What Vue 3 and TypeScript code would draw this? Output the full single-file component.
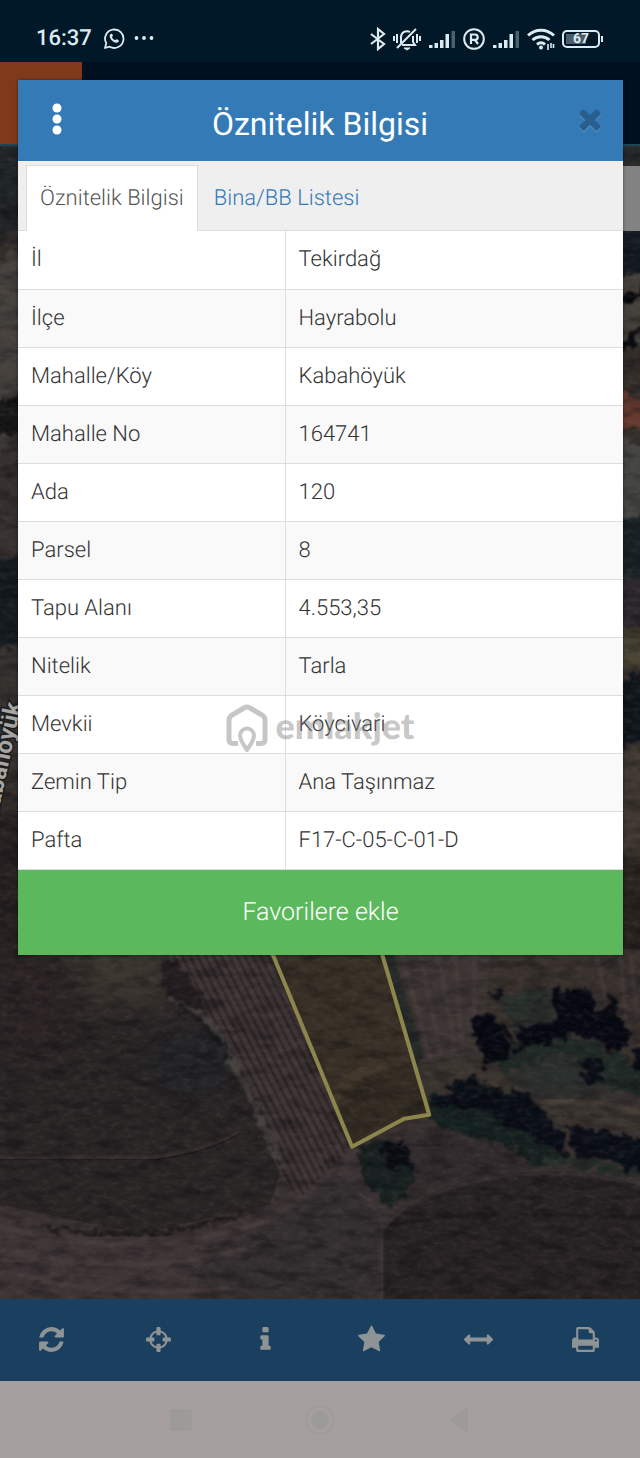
<script setup lang="ts">
import { ref } from 'vue'

interface Attribute {
  label: string
  value: string
}

interface Tool {
  name: string
  path: string
}

const attributes: Attribute[] = [
  { label: 'İl', value: 'Tekirdağ' },
  { label: 'İlçe', value: 'Hayrabolu' },
  { label: 'Mahalle/Köy', value: 'Kabahöyük' },
  { label: 'Mahalle No', value: '164741' },
  { label: 'Ada', value: '120' },
  { label: 'Parsel', value: '8' },
  { label: 'Tapu Alanı', value: '4.553,35' },
  { label: 'Nitelik', value: 'Tarla' },
  { label: 'Mevkii', value: 'Köycivari' },
  { label: 'Zemin Tip', value: 'Ana Taşınmaz' },
  { label: 'Pafta', value: 'F17-C-05-C-01-D' },
]

const tabs: string[] = ['Öznitelik Bilgisi', 'Bina/BB Listesi']
const activeTab = ref(0)

const tools: Tool[] = [
  { name: 'Yenile', path: 'M1639 1056q0 5-1 7-64 268-268 434.5t-478 166.5q-146 0-282.5-55t-243.5-157l-129 129q-19 19-45 19t-45-19-19-45v-448q0-26 19-45t45-19h448q26 0 45 19t19 45-19 45l-137 137q71 66 161 102t187 36q134 0 250-65t186-179q11-17 53-117 8-23 30-23h192q13 0 22.5 9.5t9.5 22.5zm25-800v448q0 26-19 45t-45 19h-448q-26 0-45-19t-19-45 19-45l138-138q-148-137-349-137-134 0-250 65t-186 179q-11 17-53 117-8 23-30 23h-199q-13 0-22.5-9.5t-9.5-22.5v-7q65-268 270-434.5t480-166.5q146 0 284 55.5t245 156.5l130-129q19-19 45-19t45 19 19 45z' },
  { name: 'Konum', path: 'M1325 1024h-109q-26 0-45-19t-19-45v-128q0-26 19-45t45-19h109q-32-108-112.5-188.5t-188.5-112.5v109q0 26-19 45t-45 19h-128q-26 0-45-19t-19-45v-109q-108 32-188.5 112.5t-112.5 188.5h109q26 0 45 19t19 45v128q0 26-19 45t-45 19h-109q32 108 112.5 188.5t188.5 112.5v-109q0-26 19-45t45-19h128q26 0 45 19t19 45v109q108-32 188.5-112.5t112.5-188.5zm339-192v128q0 26-19 45t-45 19h-143q-37 161-154.5 278.5t-278.5 154.5v143q0 26-19 45t-45 19h-128q-26 0-45-19t-19-45v-143q-161-37-278.5-154.5t-154.5-278.5h-143q-26 0-45-19t-19-45v-128q0-26 19-45t45-19h143q37-161 154.5-278.5t278.5-154.5v-143q0-26 19-45t45-19h128q26 0 45 19t19 45v143q161 37 278.5 154.5t154.5 278.5h143q26 0 45 19t19 45z' },
  { name: 'Bilgi', path: 'M1216 1344v128q0 26-19 45t-45 19h-512q-26 0-45-19t-19-45v-128q0-26 19-45t45-19h64v-384h-64q-26 0-45-19t-19-45v-128q0-26 19-45t45-19h384q26 0 45 19t19 45v576h64q26 0 45 19t19 45zm-128-1152v192q0 26-19 45t-45 19h-256q-26 0-45-19t-19-45v-192q0-26 19-45t45-19h256q26 0 45 19t19 45z' },
  { name: 'Favoriler', path: 'M1728 647q0 22-26 48l-363 354 86 500q1 7 1 20 0 21-10.5 35.5t-30.5 14.5q-19 0-40-12l-449-236-449 236q-22 12-40 12-21 0-31.5-14.5t-10.5-35.5q0-6 2-20l86-500-364-354q-25-27-25-48 0-37 56-46l502-73 225-455q19-41 49-41t49 41l225 455 502 73q56 9 56 46z' },
  { name: 'Ölçüm', path: 'M1792 896q0 26-19 45l-256 256q-19 19-45 19t-45-19-19-45v-128h-1024v128q0 26-19 45t-45 19-45-19l-256-256q-19-19-19-45t19-45l256-256q19-19 45-19t45 19 19 45v128h1024v-128q0-26 19-45t45-19 45 19l256 256q19 19 19 45z' },
  { name: 'Yazdır', path: 'M448 1536h896v-256h-896v256zm0-640h896v-384h-160q-40 0-68-28t-28-68v-160h-640v640zm1152 64q0-26-19-45t-45-19-45 19-19 45 19 45 45 19 45-19 19-45zm128 0v416q0 13-9.5 22.5t-22.5 9.5h-224v160q0 40-28 68t-68 28h-960q-40 0-68-28t-28-68v-160h-224q-13 0-22.5-9.5t-9.5-22.5v-416q0-79 56.5-135.5t135.5-56.5h64v-544q0-40 28-68t68-28h672q40 0 88 20t76 48l152 152q28 28 48 76t20 88v256h64q79 0 135.5 56.5t56.5 135.5z' },
]
</script>

<template>
  <div class="screen">
    <header class="status">
      <span class="clock">16:37</span>
      <svg class="whatsapp" width="22" height="22" viewBox="0 0 22 22" fill="none" stroke="currentColor" stroke-width="1.8">
        <path d="M2 20l1.300-4.700A9.200 9.200 0 1 1 6.700 18.700z" stroke-linejoin="round" />
        <path d="M7.800 6c-2 1.500-1 4.300 1.200 6.500s5 3.200 6.600 1.200c.5-.8.200-1.200-.4-1.600l-1.500-.9c-.6-.3-1 .8-1.500 1-1.200-.2-3-2-3.200-3.200.3-.4 1.100-.9.900-1.400l-.7-1.500c-.3-.5-.9-.5-1.400-.1z" fill="currentColor" stroke="none" />
      </svg>
      <svg width="22" height="22" viewBox="0 0 22 22" fill="currentColor">
        <circle cx="3.500" cy="10" r="1.900" /><circle cx="11" cy="10" r="1.900" /><circle cx="18.500" cy="10" r="1.900" />
      </svg>
      <div class="indicators">
        <svg width="16" height="24" viewBox="0 0 16 24" fill="none" stroke="currentColor" stroke-width="2.200">
          <path d="M1 7l13 10-6 5V2l6 5L1 17" />
        </svg>
        <svg width="28" height="24" viewBox="0 0 28 24" fill="none" stroke="currentColor" stroke-width="2">
          <path d="M8 16V10a6 6 0 0 1 9-5M20 9v6l2 3H9M4 21L23 2M1 9v5M4 7v9M24 7v9M27 9v5" />
          <path d="M11 21h6l-3 2z" fill="currentColor" stroke-width="1" />
        </svg>
        <svg width="28" height="24" viewBox="0 0 28 24" fill="currentColor">
          <path d="M1 18h3.500v3H1zM6.500 16H10v5H6.500zM12 13h3.500v8H12zM17.500 7H21v14h-3.500z" />
          <path d="M23.500 4H27v17h-3.500z" opacity=".35" />
        </svg>
        <svg width="22" height="24" viewBox="0 0 22 24" fill="none" stroke="currentColor" stroke-width="2">
          <circle cx="11" cy="12" r="9.800" />
          <path d="M8 17V7.500h4a2.700 2.700 0 0 1 0 5.400H8M12 13l3 4" stroke-width="2.200" />
        </svg>
        <svg width="28" height="24" viewBox="0 0 28 24" fill="currentColor">
          <path d="M1 18h3.500v3H1zM6.500 16H10v5H6.500zM12 13h3.500v8H12zM17.500 7H21v14h-3.500z" />
          <path d="M23.500 4H27v17h-3.500z" opacity=".35" />
        </svg>
        <svg width="28" height="24" viewBox="0 0 28 24" fill="none" stroke="currentColor" stroke-width="3">
          <path d="M1 8.500c7.500-7 18.500-7 26 0M5.500 13c5-4.500 12-4.500 17 0M10 17.500c2.500-2.200 5.500-2.200 8 0" />
          <circle cx="14" cy="20.500" r="1.600" fill="currentColor" stroke-width="1" />
          <path d="M21 17v6M24 16v5M26.500 17v4" stroke-width="1.600" />
        </svg>
        <span class="battery"><span class="level"></span><b>67</b></span>
      </div>
    </header>

    <div class="appbar"><div class="brand"></div></div>

    <main class="map">
      <svg class="imagery" viewBox="0 148 640 1151" preserveAspectRatio="xMidYMax slice" aria-hidden="true">
        <defs>
          <filter id="grain" x="0" y="0" width="100%" height="100%" color-interpolation-filters="sRGB">
            <feTurbulence type="fractalNoise" baseFrequency="0.12 0.22" numOctaves="4" seed="7" />
            <feColorMatrix values="0 0 0 0 .42  0 0 0 0 .38  0 0 0 0 .36  1.500 0 0 0 -.65" />
          </filter>
          <filter id="shade" x="0" y="0" width="100%" height="100%" color-interpolation-filters="sRGB">
            <feTurbulence type="fractalNoise" baseFrequency="0.04 0.1" numOctaves="4" seed="21" />
            <feColorMatrix values="0 0 0 0 0  0 0 0 0 0  0 0 0 0 .02  1.500 0 0 0 -.65" />
          </filter>
          <filter id="rough" x="-10%" y="-10%" width="120%" height="120%" color-interpolation-filters="sRGB">
            <feTurbulence type="fractalNoise" baseFrequency="0.1" numOctaves="3" seed="3" />
            <feDisplacementMap in="SourceGraphic" scale="18" xChannelSelector="R" yChannelSelector="G" />
            <feGaussianBlur stdDeviation="1" />
          </filter>
          <filter id="soft" x="-20%" y="-20%" width="140%" height="140%" color-interpolation-filters="sRGB"><feGaussianBlur stdDeviation="12" /></filter>
          <filter id="edge" x="-10%" y="-10%" width="120%" height="120%" color-interpolation-filters="sRGB"><feGaussianBlur stdDeviation="1.500" /></filter>
          <pattern id="furrows" width="7" height="40" patternUnits="userSpaceOnUse" patternTransform="rotate(-27)">
            <rect width="7" height="40" fill="#3c3233" />
            <rect width="2" height="40" fill="#2b2324" />
            <rect x="4" width="1" height="40" fill="#463a3b" />
          </pattern>
        </defs>

        <rect y="148" width="640" height="1151" fill="#332d2a" />

        <g filter="url(#rough)">
          <path d="M-10 148H40V215Q15 235-10 245z" fill="#202526" />
          <path d="M-10 265L40 240V410L-10 470z" fill="#45413d" />
          <path d="M-10 410L40 385V430L-10 440z" fill="#151617" />
          <path d="M-10 470L40 420V560H-10z" fill="#36302f" />
          <path d="M-10 560H40V650H-10z" fill="#151b20" />
          <path d="M-10 650H40V790H-10z" fill="#34322e" />
          <path d="M-10 820L40 805V1000H-10z" fill="#272121" />
          <path d="M615 148H650V165H615z" fill="#27292b" />
          <path d="M615 231H650V275H615z" fill="#151a22" />
          <path d="M615 278L650 270V340L615 350z" fill="#44403b" />
          <path d="M615 300L650 285V290L615 310zM615 345L650 320V330L615 358z" fill="#080a0e" />
          <path d="M615 385L650 410V432L615 428z" fill="#663a2e" />
          <path d="M615 440L650 450V525H615z" fill="#454541" />
          <path d="M615 525L650 510V580H615z" fill="#182224" />
          <path d="M615 580H650V630H615z" fill="#2d282d" />
          <path d="M615 630H650V670H615z" fill="#494433" />
          <path d="M615 690L650 665V745H615z" fill="#10161c" />
          <path d="M615 750H650V855H615z" fill="#403931" />
          <path d="M615 855H650V1010H615z" fill="#29231f" />
        </g>

        <rect y="950" width="640" height="349" fill="#38312f" />
        <path d="M0 950H168L180 1002 235 1050 286 1155 270 1205 140 1233 0 1205z" fill="#292525" />
        <g filter="url(#soft)">
          <path d="M60 940H165L172 1000 95 1010z" fill="#3b362f" />
          <ellipse cx="195" cy="1065" rx="50" ry="34" fill="#232326" />
          <ellipse cx="30" cy="1000" rx="45" ry="65" fill="#2b2324" />
          <path d="M500 940H600L620 990 520 1050 450 1060z" fill="#38312d" />
          <ellipse cx="560" cy="1075" rx="50" ry="25" fill="#29302d" />
        </g>
        <path d="M0 1207Q145 1270 276 1202L355 1145 395 1200 382 1299H0z" fill="#3d3435" />
        <path d="M205 1245Q265 1245 335 1170L380 1220 382 1299H195z" fill="#332e2f" filter="url(#edge)" />
        <path d="M0 1227Q150 1265 270 1219M0 1250Q120 1280 245 1249M20 1275Q100 1298 230 1288" fill="none" stroke="#463b3a" stroke-width="5" filter="url(#edge)" />
        <path d="M45 1227Q150 1248 255 1209" fill="none" stroke="#221d1d" stroke-width="5" filter="url(#rough)" />
        <path d="M0 1158H155Q205 1151 240 1132" fill="none" stroke="#443936" stroke-width="2" filter="url(#edge)" />
        <path d="M0 1160H155Q205 1154 240 1134" fill="none" stroke="#1b1918" stroke-width="1" />

        <path d="M168 950H273L352 1147 300 1198 282 1178 215 1025z" fill="url(#furrows)" filter="url(#edge)" opacity=".5" />
        <path d="M168 950H273L352 1147 300 1198 282 1178 215 1025z" fill="url(#furrows)" opacity=".7" />
        <g filter="url(#rough)">
          <path d="M162 955L168 1002 208 1010 192 980z" fill="#231d20" />
          <path d="M168 1001Q215 1014 228 1050L284 1170" fill="none" stroke="#45413f" stroke-width="6" />
          <path d="M178 1008Q214 1022 228 1058" fill="none" stroke="#191b1d" stroke-width="4" />
        </g>

        <path d="M385 955H490L483 1050 424 1065z" fill="#3c3533" />
        <path d="M402 955L430 1058M420 955L441 1056M438 955L455 1050M455 955L462 1050M474 955V1040" stroke="#463c3b" stroke-width="4" filter="url(#edge)" />
        <path d="M382 955H393L424 1055 416 1066z" fill="#262b29" filter="url(#edge)" />
        <path d="M596 955L605 1000M620 955L625 1020M630 955L637 1020" stroke="#463c39" stroke-width="3" filter="url(#edge)" />

        <path d="M273 955H382L429 1115 404 1119 352 1147z" fill="#383026" />
        <path d="M330 1090Q370 1050 408 1059L415 1070Q365 1066 335 1105z" fill="#42372a" filter="url(#edge)" />
        <path d="M342 1096Q380 1064 414 1067L426 1111 400 1117 352 1142z" fill="#322b22" filter="url(#edge)" />

        <path d="M420 1065Q470 1048 515 1085L550 1108 640 1112V1132L555 1122 480 1082 430 1090z" fill="#3b3530" filter="url(#edge)" />
        <path d="M540 1103Q590 1097 640 1113" fill="none" stroke="#4a4139" stroke-width="5" filter="url(#edge)" />
        <path d="M383 1299V1230Q430 1175 530 1172 600 1168 640 1188V1299z" fill="#272224" />
        <path d="M382 1299V1228Q430 1180 530 1174 600 1170 640 1190" fill="none" stroke="#3f3838" stroke-width="2" filter="url(#edge)" />
        <path d="M390 1225Q490 1208 640 1218" fill="none" stroke="#19171a" stroke-width="2" filter="url(#edge)" />
        <path d="M405 1140Q450 1118 500 1140L535 1170Q450 1180 400 1198z" fill="#322b2d" filter="url(#edge)" />

        <g filter="url(#rough)">
          <path d="M428 1100L462 1085 510 1090 545 1115 566 1160 540 1168 505 1145 430 1125z" fill="#15211f" />
          <path d="M430 1106L452 1085 472 1073 485 1085 462 1100 495 1088 530 1097 562 1135 566 1158 535 1140 488 1112 450 1108z" fill="#0a0e16" />
          <path d="M356 1154L380 1140 408 1145 414 1175 395 1212 370 1190z" fill="#182120" />
          <path d="M378 1146L406 1140 410 1168 390 1172z" fill="#0a0c14" />
          <path d="M490 1048L560 1033 640 1064V1098L592 1085 570 1052 500 1072z" fill="#1f2925" />
          <path d="M500 1000L545 985 560 1025 518 1032z" fill="#292f2b" />
          <path d="M470 1020L488 1013 509 1035 510 1060 485 1068z" fill="#070912" />
          <path d="M516 1030L560 1018 552 990 590 990 600 1015 612 994 628 1040 617 1055 592 1040 570 1035 516 1052z" fill="#070912" />
          <path d="M578 1060L600 1057 604 1080 585 1086zM632 1045H650V1080L636 1072zM492 990L502 988 500 1000 492 999z" fill="#0a0d15" />
          <path d="M564 1120L595 1130 650 1140V1180L610 1160 575 1158z" fill="#0b0f17" />
          <path d="M545 1162L590 1165 640 1175" fill="none" stroke="#262d29" stroke-width="8" />
        </g>

        <rect y="148" width="640" height="1151" filter="url(#grain)" opacity=".3" />
        <rect y="148" width="640" height="1151" filter="url(#shade)" opacity=".5" />

        <path d="M270 948L352 1147 404 1119 429 1115 380 948" fill="none" stroke="#8c854c" stroke-width="4" stroke-linejoin="round" />
        <text class="place" transform="translate(-3 822) rotate(-78)">Kabahöyük</text>
      </svg>
      <div class="search"></div>
    </main>

    <nav class="toolbar" aria-label="Harita araçları">
      <button v-for="tool in tools" :key="tool.name" type="button" :aria-label="tool.name">
        <svg width="29" height="29" viewBox="0 0 1792 1792" fill="currentColor"><path :d="tool.path" /></svg>
      </button>
    </nav>

    <nav class="system" aria-label="Sistem">
      <button type="button" aria-label="Son uygulamalar">
        <svg width="32" height="32" viewBox="0 0 32 32"><rect x="5" y="5" width="22" height="22" rx="2" fill="#9c9b98" /></svg>
      </button>
      <button type="button" aria-label="Ana ekran">
        <svg width="32" height="32" viewBox="0 0 32 32"><circle cx="16" cy="16" r="14" fill="none" stroke="#a09b99" stroke-width="2" /><circle cx="16" cy="16" r="9" fill="#9d9b99" /></svg>
      </button>
      <button type="button" aria-label="Geri">
        <svg width="32" height="32" viewBox="0 0 32 32"><path d="M6 16L25 3v26z" fill="#9c9b98" /></svg>
      </button>
    </nav>

    <section class="dialog" role="dialog" aria-labelledby="dialog-title">
      <div class="heading">
        <button class="menu" type="button" aria-label="Menü">
          <svg width="12" height="32" viewBox="0 0 12 32" fill="currentColor"><circle cx="6" cy="5" r="4.500" /><circle cx="6" cy="16" r="4.500" /><circle cx="6" cy="27" r="4.500" /></svg>
        </button>
        <h1 id="dialog-title">Öznitelik Bilgisi</h1>
        <button class="close" type="button" aria-label="Kapat">
          <svg width="32" height="32" viewBox="0 0 1792 1792" fill="currentColor"><path d="M1490 1322q0 40-28 68l-136 136q-28 28-68 28t-68-28l-294-294-294 294q-28 28-68 28t-68-28l-136-136q-28-28-28-68t28-68l294-294-294-294q-28-28-28-68t28-68l136-136q28-28 68-28t68 28l294 294 294-294q28-28 68-28t68 28l136 136q28 28 28 68t-28 68l-294 294 294 294q28 28 28 68z" /></svg>
        </button>
      </div>
      <div class="tabs" role="tablist">
        <button
          v-for="(tab, i) in tabs"
          :key="tab"
          type="button"
          role="tab"
          :aria-selected="activeTab === i"
          :class="{ active: activeTab === i }"
          @click="activeTab = i"
        >{{ tab }}</button>
      </div>
      <table>
        <tbody>
          <tr v-for="row in attributes" :key="row.label">
            <th scope="row">{{ row.label }}</th>
            <td>{{ row.value }}</td>
          </tr>
        </tbody>
      </table>
      <button class="favorite" type="button">Favorilere ekle</button>
    </section>

    <div class="watermark">
      <svg width="42" height="50" viewBox="0 0 42 50" fill="none" stroke="currentColor" stroke-width="5" stroke-linejoin="round">
        <path d="M12 39.500H7Q3 39.500 3 35.500V16Q3 13 6 11L18 4Q21 2 24 4L36 11Q39 13 39 16V35.500Q39 39.500 35 39.500H30" />
        <path d="M21 46Q14 36 14 31.500A7 7 0 0 1 28 31.500Q28 36 21 46z" stroke-width="4" />
      </svg>
      <span>emlakjet</span>
    </div>
  </div>
</template>

<style>
body {
  margin: 0;
}
</style>

<style scoped>
.screen {
  position: relative;
  display: flex;
  flex-direction: column;
  min-height: 100vh;
  overflow: hidden;
  background: #00101f;
  font-family: Roboto, "Noto Sans", sans-serif;
  font-size: 22px;
  text-rendering: geometricPrecision;
}

button {
  margin: 0;
  padding: 0;
  border: 0;
  background: none;
  font: inherit;
  color: inherit;
  text-rendering: inherit;
  cursor: pointer;
}

svg {
  display: block;
  flex: none;
}

.status {
  display: flex;
  align-items: center;
  gap: 8px;
  height: 62px;
  box-sizing: border-box;
  padding: 15px 40px 0 36px;
  background: #001827;
  color: #dcebf2;
}

.clock {
  font-weight: 500;
}

.whatsapp {
  margin-left: 3px;
}

.indicators {
  display: flex;
  align-items: center;
  gap: 7px;
  margin-left: auto;
}

.battery {
  position: relative;
  display: flex;
  align-items: center;
  justify-content: center;
  width: 38px;
  height: 18px;
  box-sizing: border-box;
  border: 2px solid currentColor;
  border-radius: 5px;
  font-size: 14px;
  line-height: 14px;
}

.battery b {
  position: relative;
  font-weight: 700;
}

.battery::after {
  content: "";
  position: absolute;
  top: 4px;
  right: -5px;
  width: 2px;
  height: 6px;
  background: currentColor;
}

.level {
  position: absolute;
  inset: 2px 12px 2px 2px;
  background: #4c5c68;
}

.appbar {
  height: 84px;
  border-bottom: 2px solid #1d4554;
  box-sizing: border-box;
}

.brand {
  width: 82px;
  height: 100%;
  background: #803a1b;
}

.map {
  position: relative;
  flex: 1;
  min-height: 1153px;
}

.imagery {
  position: absolute;
  inset: 0;
  width: 100%;
  height: 100%;
}

.place {
  fill: #a5a5a3;
  stroke: #1c1c1c;
  stroke-width: 3px;
  paint-order: stroke;
  font: 700 24px Roboto, sans-serif;
}

.search {
  position: absolute;
  top: 20px;
  right: 0;
  width: 50%;
  height: 65px;
  background: #828282;
}

.toolbar {
  display: grid;
  grid-template-columns: repeat(6, 1fr);
  height: 82px;
  box-sizing: border-box;
  background: #1b405f;
  color: #8e9496;
}

.toolbar button {
  display: grid;
  place-items: center;
  padding: 0 3px 2px 0;
}

.system {
  display: flex;
  justify-content: center;
  align-items: center;
  gap: 107px;
  height: 77px;
  background: #a59f9d;
}

.dialog {
  position: absolute;
  top: 80px;
  left: 18px;
  right: 17px;
  background: #fff;
  box-shadow: 0 0 3px rgba(0, 0, 0, .5);
  color: #333;
  font-weight: 300;
}

.heading {
  display: flex;
  align-items: center;
  justify-content: space-between;
  height: 81px;
  box-sizing: border-box;
  padding: 0 17px 0 33px;
  background: #337ab7;
  color: #fff;
}

.menu {
  padding: 0 3px 4px 0;
}

.heading h1 {
  margin: 0;
  padding-top: 6px;
  font-size: 32px;
  line-height: 40px;
  font-weight: 400;
}

.close {
  padding-bottom: 4px;
  color: #285f8f;
  filter: drop-shadow(0 1px 0 #5f9bd0);
}

.tabs {
  display: flex;
  height: 70px;
  box-sizing: border-box;
  padding: 4px 8px 0;
  border-bottom: 1px solid #ddd;
  background: #efefef;
}

.tabs button {
  height: 66px;
  box-sizing: border-box;
  padding: 0 13px;
  border: 1px solid transparent;
  color: #337ab7;
}

.tabs button + button {
  padding-left: 15px;
}

.tabs .active {
  border-color: #ddd;
  border-bottom-color: #fff;
  background: #fff;
  color: #555;
}

table {
  width: 100%;
  border-collapse: collapse;
  table-layout: fixed;
}

th,
td {
  height: 58px;
  box-sizing: border-box;
  padding: 0 13px;
  border-bottom: 1px solid #ddd;
  text-align: left;
  font-weight: 300;
}

th {
  width: 267px;
  border-right: 1px solid #ddd;
}

tr:nth-child(even) {
  background: #f9f9f9;
}

.favorite {
  display: block;
  width: 100%;
  height: 85px;
  background: #5cb85c;
  color: #fff;
  font-size: 25px;
  font-weight: 300;
}

.watermark {
  position: absolute;
  inset: 0;
  display: flex;
  align-items: center;
  justify-content: center;
  gap: 8px;
  color: rgba(120, 120, 120, .42);
  pointer-events: none;
}

.watermark span {
  padding-bottom: 8px;
  font-family: Lato, sans-serif;
  font-size: 36px;
  line-height: 40px;
  font-weight: 900;
}
</style>
